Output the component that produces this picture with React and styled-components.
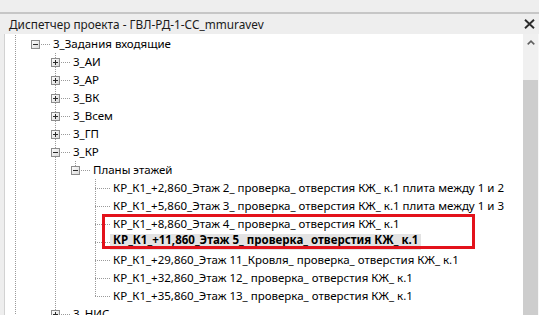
import React from "react";
import styled, { createGlobalStyle } from "styled-components";

const GlobalStyle = createGlobalStyle`
  html, body {
    margin: 0;
    padding: 0;
    background: #eeeeee;
  }
  body {
    font-family: "Noto Sans", "Open Sans", sans-serif;
    font-size: 11.5px;
    color: #000;
  }
`;

const DOT = "#9a9a9a";
const vDots = `repeating-linear-gradient(to bottom, ${DOT} 0 1px, transparent 1px 2px)`;
const hDots = `repeating-linear-gradient(to right, ${DOT} 0 1px, transparent 1px 2px)`;

const rows = [
  { d: 1, text: "3_Задания входящие", exp: "-", guides: [1], v: "none" },
  { d: 2, text: "3_АИ", exp: "+", guides: [1, 0], v: "full" },
  { d: 2, text: "3_АР", exp: "+", guides: [1, 0], v: "full" },
  { d: 2, text: "3_ВК", exp: "+", guides: [1, 0], v: "full" },
  { d: 2, text: "3_Всем", exp: "+", guides: [1, 0], v: "full" },
  { d: 2, text: "3_ГП", exp: "+", guides: [1, 0], v: "full" },
  { d: 2, text: "3_КР", exp: "-", guides: [1, 0], v: "full" },
  { d: 3, text: "Планы этажей", exp: "-", guides: [1, 0, 1], v: "top" },
  { d: 4, text: "КР_К1_+2,860_Этаж 2_ проверка_ отверстия КЖ_ к.1 плита между 1 и 2", guides: [1, 0, 1, 0], v: "full" },
  { d: 4, text: "КР_К1_+5,860_Этаж 3_ проверка_ отверстия КЖ_ к.1 плита между 1 и 3", guides: [1, 0, 1, 0], v: "full" },
  { d: 4, text: "КР_К1_+8,860_Этаж 4_ проверка_ отверстия КЖ_ к.1", guides: [1, 0, 1, 0], v: "full" },
  { d: 4, text: "КР_К1_+11,860_Этаж 5_ проверка_ отверстия КЖ_ к.1", guides: [1, 0, 1, 0], v: "full", selected: true },
  { d: 4, text: "КР_К1_+29,860_Этаж 11_Кровля_ проверка_ отверстия КЖ_ к.1", guides: [1, 0, 1, 0], v: "full" },
  { d: 4, text: "КР_К1_+32,860_Этаж 12_ проверка_ отверстия КЖ_ к.1", guides: [1, 0, 1, 0], v: "full" },
  { d: 4, text: "КР_К1_+35,860_Этаж 13_ проверка_ отверстия КЖ_ к.1", guides: [1, 0, 1, 0], v: "top" },
  { d: 2, text: "3_НИС", exp: "+", guides: [1, 0], v: "full" },
];

const Window = styled.div`
  width: 539px;
  height: 315px;
  overflow: hidden;
  background: #eeeeee;
`;

const TopStrip = styled.div`
  height: 12px;
  background: #eeeeee;
  border-bottom: 2px solid #c6c6c6;
`;

const TitleBar = styled.div`
  height: 20px;
  display: flex;
  align-items: center;
  justify-content: space-between;
  padding: 0 3px 0 9px;
  background: #eeeeee;
  color: #1b1b1b;
  line-height: 20px;
`;

const Title = styled.span`
  white-space: nowrap;
  font-size: 11.8px;
`;

const CloseButton = styled.span`
  display: flex;
  width: 13px;
  height: 20px;
  align-items: center;
  justify-content: center;
`;

const Body = styled.div`
  position: relative;
  display: flex;
  height: 281px;
`;

const LeftEdge = styled.div`
  width: 4px;
  background: #eeeeee;
  border-right: 1px solid #d2d2d2;
`;

const Tree = styled.div`
  flex: 1;
  background: #fff;
  padding-top: 1px;
  overflow: hidden;
`;

const Row = styled.div`
  display: flex;
  height: 18px;
  white-space: nowrap;
`;

const Guide = styled.span`
  flex: none;
  width: 20px;
  background-image: ${(p) => (p.$line ? vDots : "none")};
  background-size: 1px 100%;
  background-position: 10px 0;
  background-repeat: no-repeat;
`;

const vSize = { full: "1px 100%", top: "1px 9px", none: "0 0" };

const Connector = styled.span`
  flex: none;
  width: 25px;
  display: flex;
  align-items: flex-start;
  padding: 5px 0 0 6px;
  box-sizing: border-box;
  background-image: ${vDots}, ${hDots};
  background-size: ${(p) => vSize[p.$v]}, 15px 1px;
  background-position: 10px 0, 10px 9px;
  background-repeat: no-repeat;
`;

const Label = styled.span`
  display: inline-block;
  box-sizing: border-box;
  height: 16px;
  margin-top: 1px;
  padding: 0 3px;
  line-height: ${(p) => (p.$selected ? "11px" : "15px")};
  font-weight: ${(p) => (p.$selected ? 700 : 400)};
  background: ${(p) => (p.$selected ? "#e3e3e3" : "transparent")};
`;

const Scrollbar = styled.div`
  width: 15px;
  display: flex;
  flex-direction: column;
  background: #f0f0f0;
  border-right: 1px solid #f7f7f7;
`;

const ArrowButton = styled.div`
  height: 17px;
  display: flex;
  align-items: center;
  justify-content: center;
`;

const Track = styled.div`
  height: 29px;
`;

const Thumb = styled.div`
  flex: 1;
  background: #cdcdcd;
`;

const Highlight = styled.div`
  position: absolute;
  left: 102px;
  top: 180px;
  width: 373px;
  height: 35px;
  box-sizing: border-box;
  border: 3px solid #e3121b;
  pointer-events: none;
`;

const Expander = ({ sign }) => (
  <svg width="9" height="9" viewBox="0 0 9 9">
    <defs>
      <linearGradient id={`eg${sign}`} x1="0" y1="0" x2="1" y2="1">
        <stop offset="0" stopColor="#ffffff" />
        <stop offset="1" stopColor="#d8d8d8" />
      </linearGradient>
    </defs>
    <rect x="0.5" y="0.5" width="8" height="8" fill={`url(#eg${sign})`} stroke="#8c8c8c" />
    <rect x="2" y="4" width="5" height="1" fill="#2a2a2a" />
    {sign === "+" && <rect x="4" y="2" width="1" height="5" fill="#2a2a2a" />}
  </svg>
);

const CloseIcon = () => (
  <svg width="11" height="10" viewBox="0 0 11 10">
    <path d="M1 0.8 L10 9.2 M10 0.8 L1 9.2" stroke="#2b2b2b" strokeWidth="1.9" />
  </svg>
);

const UpIcon = () => (
  <svg width="8" height="5" viewBox="0 0 8 5">
    <path d="M0.7 4.3 L4 1.2 L7.3 4.3" stroke="#606060" strokeWidth="1.6" fill="none" />
  </svg>
);

const TreeRow = ({ row }) => (
  <Row>
    {row.guides.map((g, i) => (
      <Guide key={i} $line={g === 1} />
    ))}
    <Connector $v={row.v}>{row.exp && <Expander sign={row.exp} />}</Connector>
    <Label $selected={row.selected}>{row.text}</Label>
  </Row>
);

export default function App() {
  return (
    <Window>
      <GlobalStyle />
      <TopStrip />
      <TitleBar>
        <Title>Диспетчер проекта - ГВЛ-РД-1-СС_mmuravev</Title>
        <CloseButton>
          <CloseIcon />
        </CloseButton>
      </TitleBar>
      <Body>
        <LeftEdge />
        <Tree>
          {rows.map((row, i) => (
            <TreeRow key={i} row={row} />
          ))}
        </Tree>
        <Scrollbar>
          <ArrowButton>
            <UpIcon />
          </ArrowButton>
          <Track />
          <Thumb />
        </Scrollbar>
        <Highlight />
      </Body>
    </Window>
  );
}
